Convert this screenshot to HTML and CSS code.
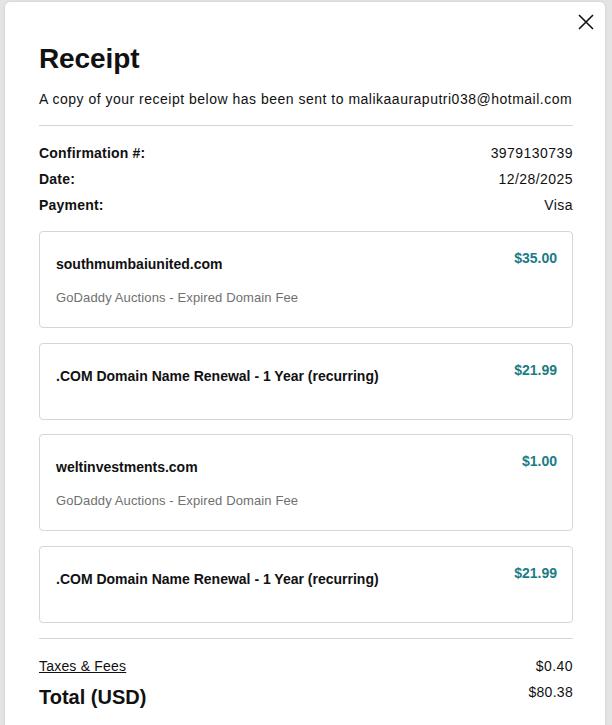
FILE: index.html
```html
<!DOCTYPE html>
<html>
<head>
<meta charset="utf-8">
<link rel="stylesheet" href="styles.css">
</head>
<body>
<div class="modal">
  <button class="close" aria-label="Close">
    <svg width="16" height="16" viewBox="0 0 16 16"><path d="M1 1L15 15M15 1L1 15" stroke="#111" stroke-width="1.6" fill="none"/></svg>
  </button>
  <h1 class="title">Receipt</h1>
  <p class="lead">A copy of your receipt below has been sent to malikaauraputri038@hotmail.com</p>
  <div class="rule"></div>
  <div class="meta">
    <div class="meta-row"><span class="label">Confirmation #:</span><span class="val">3979130739</span></div>
    <div class="meta-row"><span class="label">Date:</span><span class="val">12/28/2025</span></div>
    <div class="meta-row"><span class="label">Payment:</span><span class="val">Visa</span></div>
  </div>
  <div class="items">
    <div class="card">
      <div class="card-top"><span class="item-name">southmumbaiunited.com</span><span class="price">$35.00</span></div>
      <div class="sub">GoDaddy Auctions - Expired Domain Fee</div>
    </div>
    <div class="card">
      <div class="card-top"><span class="item-name">.COM Domain Name Renewal - 1 Year (recurring)</span><span class="price">$21.99</span></div>
    </div>
    <div class="card">
      <div class="card-top"><span class="item-name">weltinvestments.com</span><span class="price">$1.00</span></div>
      <div class="sub">GoDaddy Auctions - Expired Domain Fee</div>
    </div>
    <div class="card">
      <div class="card-top"><span class="item-name">.COM Domain Name Renewal - 1 Year (recurring)</span><span class="price">$21.99</span></div>
    </div>
  </div>
  <div class="rule rule-bottom"></div>
  <div class="tax-row"><a class="tax-link" href="#">Taxes &amp; Fees</a><span class="val">$0.40</span></div>
  <div class="total-row"><span class="total-label">Total (USD)</span><span class="total-value">$80.38</span></div>
</div>
</body>
</html>
```
FILE: styles.css
```css
* { box-sizing: border-box; }
html, body { margin: 0; padding: 0; }
body {
  background: #e4e4e4;
  font-family: "Liberation Sans", Arial, sans-serif;
  color: #111;
  height: 725px;
  overflow: hidden;
}
.modal {
  position: relative;
  margin: 2px 0 0 5px;
  width: 600px;
  min-height: 760px;
  background: #fff;
  border-radius: 5px;
  padding: 39px 32px 0 34px;
  box-shadow: 0 0 3px rgba(0,0,0,0.12);
}
.close {
  position: absolute;
  top: 11px;
  right: 10px;
  width: 18px;
  height: 18px;
  padding: 1px;
  border: 0;
  background: none;
}
.close svg { display: block; }
.title {
  margin: 0;
  font-size: 28px;
  line-height: 36px;
  font-weight: 700;
  letter-spacing: -0.1px;
}
.lead {
  margin: 12px 0 0;
  font-size: 14px;
  line-height: 20px;
  letter-spacing: 0.5px;
  white-space: nowrap;
}
.rule {
  height: 1px;
  background: #d4d4d4;
  margin-top: 16px;
}
.meta { margin-top: 14px; }
.meta-row {
  display: flex;
  justify-content: space-between;
  font-size: 14px;
  line-height: 26px;
}
.val { letter-spacing: 0.45px; }
.label { font-weight: 700; letter-spacing: 0.2px; }
.items {
  margin-top: 13px;
  display: flex;
  flex-direction: column;
  gap: 14.6px;
}
.card {
  border: 1px solid #d6d6d6;
  border-radius: 4px;
  padding: 15px 15px 16px 16px;
}
.card-top {
  display: flex;
  justify-content: space-between;
  align-items: flex-start;
  margin-bottom: 16px;
}
.item-name {
  margin-top: 6px;
  font-size: 14px;
  line-height: 22px;
  font-weight: 700;
}
.price {
  font-size: 14px;
  line-height: 22px;
  font-weight: 700;
  color: #1a7c85;
}
.sub {
  margin: -3px 0 3px;
  font-size: 13px;
  line-height: 20px;
  color: #707070;
  letter-spacing: 0.12px;
}
.rule-bottom { margin-top: 15.2px; }
.tax-row {
  margin-top: 17px;
  display: flex;
  justify-content: space-between;
  font-size: 14px;
  line-height: 20px;
}
.tax-link { color: #111; text-decoration: underline; letter-spacing: 0.2px; }
.total-row {
  display: flex;
  justify-content: space-between;
  align-items: flex-start;
  margin-top: 7px;
}
.total-label {
  font-size: 20px;
  line-height: 28px;
  font-weight: 700;
}
.total-value {
  margin-top: -1px;
  font-size: 14px;
  line-height: 20px;
  letter-spacing: 0.3px;
}
```
